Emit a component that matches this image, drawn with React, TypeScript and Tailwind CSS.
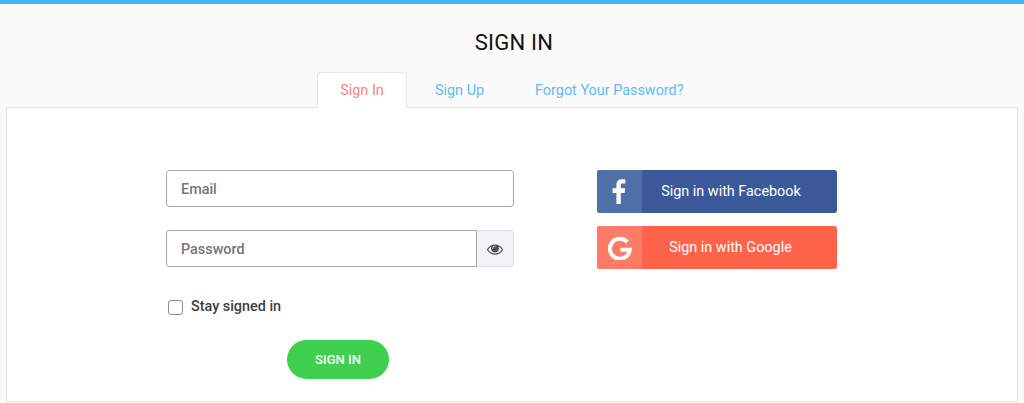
import React from "react";

function Eye() {
  return (
    <svg width="16" height="16" viewBox="0 0 1792 1792" fill="#495057">
      <path d="M1664 960q-152-236-381-355 61 104 61 227 0 185-131.500 316.500t-316.500 131.500-316.500-131.500-131.500-316.500q0-123 61-227-229 119-381 355 133 205 333.500 326.500t434.500 121.500 434.500-121.500 333.500-326.500zm-720-384q0-20-14-34t-34-14q-125 0-214.500 89.500t-89.500 214.500q0 20 14 34t34 14 34-14 14-34q0-86 61-147t147-61q20 0 34-14t14-34zm848 384q0 34-20 69-140 230-376.500 368.500t-499.500 138.500-499.500-139-376.500-368q-20-35-20-69t20-69q140-229 376.500-368t499.500-139 499.500 139 376.500 368q20 35 20 69z" />
    </svg>
  );
}

function Fb() {
  return (
    <svg width="15" height="25" viewBox="0 0 15 25" fill="#fff">
      <path d="M4.4 25V14H0.6V9.300H4.4V6C4.400 2.300 6.600 0.300 9.900 0.300C11.500 0.300 12.900 0.400 13.300 0.500V4.600H10.900C9.100 4.600 8.800 5.500 8.800 6.700V9.300H13.200L12.600 14H8.800V25H4.400Z" />
    </svg>
  );
}

function G() {
  return (
    <svg width="24" height="24" viewBox="0 0 24 24" fill="none">
      <path d="M19.300 6A10 10 0 1 0 21.800 13.800H12.500" stroke="#fff" strokeWidth="4" />
    </svg>
  );
}

export default function App() {
  return (
    <div className="h-[403px] w-[1024px] overflow-hidden border-t-4 border-[#45b5f1] bg-[#fafafa] font-['Roboto',sans-serif]">
      <h1 className="mt-[25px] ml-[4px] text-center text-[22px] leading-[28px] font-normal tracking-[0.2px] text-[#111]">
        SIGN IN
      </h1>
      <div className="mt-[15px] ml-[317px] flex h-[36px] items-start text-[14.4px] leading-[36px]">
        <div className="relative z-10 h-[36px] w-[90px] rounded-t-[4px] border border-b-0 border-[#e6e6e6] bg-white text-center leading-[36px] text-[#ff8177]">
          Sign In
        </div>
        <div className="ml-[28px] leading-[37px] text-[#5fb9f5]">Sign Up</div>
        <div className="ml-[51px] leading-[37px] text-[#5fb9f5]">Forgot Your Password?</div>
      </div>
      <div className="mx-[6px] -mt-px flex h-[295px] w-[1012px] border border-[#e6e6e6] bg-white pt-[62px] pl-[159px]">
        <div className="w-[348px]">
          <div className="flex h-[37px] items-center rounded-[3px] border border-[#a8a8a8] bg-white pt-[3px] pl-[14px] text-[14.4px] font-medium text-[#757575]">
            Email
          </div>
          <div className="mt-[23px] flex h-[37px]">
            <div className="flex flex-1 items-center rounded-l-[3px] border border-[#a8a8a8] bg-white pt-[3px] pl-[14px] text-[14.4px] font-medium text-[#757575]">
              Password
            </div>
            <div className="flex w-[37px] items-center justify-center rounded-r-[4px] border border-l-0 border-[#dee2e6] bg-[#f2f3f5]">
              <Eye />
            </div>
          </div>
          <label className="mt-[30px] flex items-center pl-[2px]">
            <span className="h-[15px] w-[15px] rounded-[3px] border border-[#8a8a8a] bg-white" />
            <span className="ml-[8px] text-[14.4px] leading-[20px] font-medium text-[#3c4043]">Stay signed in</span>
          </label>
          <div className="mt-[23px] ml-[121px] flex h-[39px] w-[102px] items-center justify-center rounded-full bg-[#40d04f] text-[13px] font-medium text-white">
            SIGN IN
          </div>
        </div>
        <div className="ml-[83px] flex w-[240px] flex-col gap-[13px]">
          <div className="flex h-[43px] overflow-hidden rounded-[3px] bg-[#3b5998] text-[14.4px] text-white">
            <div className="flex w-[45px] items-center justify-center bg-[#597ab0]/70">
              <Fb />
            </div>
            <div className="flex flex-1 items-center justify-center pr-[17px]">Sign in with Facebook</div>
          </div>
          <div className="flex h-[43px] overflow-hidden rounded-[3px] bg-[#ff634a] text-[14.4px] text-white">
            <div className="flex w-[45px] items-center justify-center bg-[#ff7b65]">
              <G />
            </div>
            <div className="flex flex-1 items-center justify-center pr-[18px]">Sign in with Google</div>
          </div>
        </div>
      </div>
    </div>
  );
}
